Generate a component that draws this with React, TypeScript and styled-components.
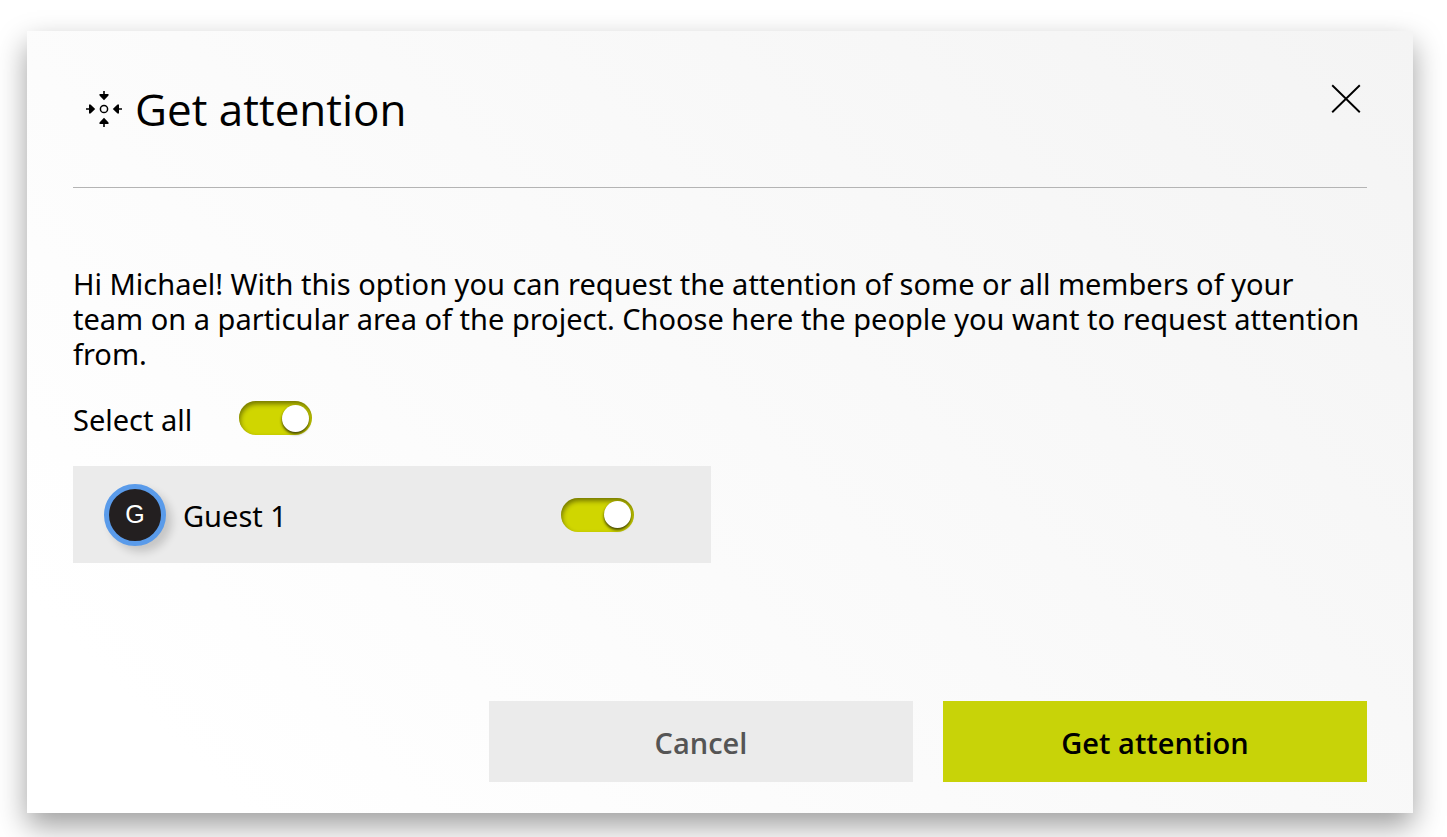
import React, { useState } from "react";
import styled, { createGlobalStyle } from "styled-components";

const GlobalStyle = createGlobalStyle`
  * { box-sizing: border-box; }
  body {
    margin: 0;
    background: #fff;
    color: #000;
    font-family: "Segoe UI", "Noto Sans", "Open Sans", sans-serif;
  }
`;

const headingFont = `"Segoe UI", "Open Sans", "Noto Sans", sans-serif`;

const Page = styled.div`
  min-height: 100vh;
  padding: 31px 34px 24px 27px;
  display: flex;
  overflow: hidden;
`;

const Dialog = styled.section`
  flex: 1;
  display: flex;
  flex-direction: column;
  padding: 0 46px 31px;
  background: linear-gradient(45deg, #ffffff 10%, #f4f4f4);
  box-shadow: 0 13px 28px rgba(0, 0, 0, 0.38);
`;

const Header = styled.header`
  display: flex;
  align-items: flex-start;
  justify-content: space-between;
  height: 157px;
  padding: 50px 6px 0 13px;
  border-bottom: 1px solid #b4b4b4;
`;

const Title = styled.h1`
  display: flex;
  align-items: center;
  gap: 13px;
  margin: 0;
  font-family: ${headingFont};
  font-size: 44px;
  line-height: 56px;
  font-weight: 400;
`;

const CloseButton = styled.button`
  display: flex;
  margin-top: 3px;
  padding: 0;
  border: 0;
  background: none;
  cursor: pointer;
`;

const Intro = styled.p`
  margin: 78px 0 28px;
  font-size: 29px;
  line-height: 35px;
`;

const SelectAllRow = styled.div`
  display: flex;
  align-items: center;
  gap: 47px;
  height: 38px;
  margin-bottom: 29px;
`;

const Label = styled.label`
  padding-top: 3px;
  font-size: 29px;
  line-height: 36px;
`;

const Toggle = styled.input`
  appearance: none;
  display: flex;
  align-items: center;
  width: 73px;
  height: 34px;
  margin: 0;
  padding: 0 3px;
  border-radius: 17px;
  background: #b9b9b9;
  box-shadow: inset 1px 3px 5px rgba(0, 0, 0, 0.45);
  cursor: pointer;

  &::before {
    content: "";
    width: 27px;
    height: 27px;
    border-radius: 50%;
    background: #fff;
    box-shadow: 0 2px 3px rgba(0, 0, 0, 0.7);
  }

  &:checked {
    justify-content: flex-end;
    background: #d0d600;
  }
`;

const Members = styled.ul`
  margin: 0;
  padding: 0;
  list-style: none;
`;

const Member = styled.li`
  display: flex;
  align-items: center;
  width: 638px;
  max-width: 100%;
  height: 97px;
  padding: 0 77px 0 31px;
  background: #ebebeb;

  ${Label} {
    flex: 1;
    margin-left: 17px;
  }
`;

const Avatar = styled.span`
  display: flex;
  align-items: center;
  justify-content: center;
  width: 62px;
  height: 62px;
  border: 5px solid #5a9bea;
  border-radius: 50%;
  background: #231f20;
  color: #fff;
  font-family: "Liberation Sans", sans-serif;
  font-size: 25px;
  box-shadow: 6px 6px 9px rgba(0, 0, 0, 0.16);
`;

const Footer = styled.footer`
  display: flex;
  justify-content: flex-end;
  gap: 30px;
  margin-top: auto;
`;

const Action = styled.button<{ $primary?: boolean }>`
  width: 424px;
  height: 81px;
  padding: 2px 0 0;
  border: 0;
  background: ${(p) => (p.$primary ? "#c8d308" : "#ebebeb")};
  color: ${(p) => (p.$primary ? "#000" : "#555")};
  font-family: ${headingFont};
  font-size: 29px;
  font-weight: 600;
  cursor: pointer;
`;

const AttentionIcon = () => (
  <svg width="36" height="36" viewBox="0 0 36 36" aria-hidden="true">
    <circle cx="18" cy="18" r="3.6" fill="none" stroke="#000" strokeWidth="1.5" />
    {[0, 90, 180, 270].map((angle) => (
      <path
        key={angle}
        d="M17.2 0h1.6v3h3.7v1.5L18 9.2l-4.5-4.7V3h3.7z"
        transform={`rotate(${angle} 18 18)`}
      />
    ))}
  </svg>
);

const CloseIcon = () => (
  <svg width="30" height="30" viewBox="0 0 30 30" aria-hidden="true">
    <path d="M1.2 1.2l27.6 27.1M28.8 1.2L1.2 28.3" stroke="#000" strokeWidth="1.9" />
  </svg>
);

export default function App() {
  const [selected, setSelected] = useState(true);
  const toggle = () => setSelected(!selected);

  return (
    <Page>
      <GlobalStyle />
      <Dialog role="dialog" aria-labelledby="dialog-title">
        <Header>
          <Title id="dialog-title">
            <AttentionIcon />
            Get attention
          </Title>
          <CloseButton type="button" aria-label="Close">
            <CloseIcon />
          </CloseButton>
        </Header>
        <Intro>
          Hi Michael! With this option you can request the attention of some or all members of your
          team on a particular area of the project. Choose here the people you want to request
          attention from.
        </Intro>
        <SelectAllRow>
          <Label htmlFor="all">Select all</Label>
          <Toggle id="all" type="checkbox" checked={selected} onChange={toggle} />
        </SelectAllRow>
        <Members>
          <Member>
            <Avatar aria-hidden="true">G</Avatar>
            <Label htmlFor="guest-1">Guest 1</Label>
            <Toggle id="guest-1" type="checkbox" checked={selected} onChange={toggle} />
          </Member>
        </Members>
        <Footer>
          <Action type="button">Cancel</Action>
          <Action type="button" $primary>
            Get attention
          </Action>
        </Footer>
      </Dialog>
    </Page>
  );
}
